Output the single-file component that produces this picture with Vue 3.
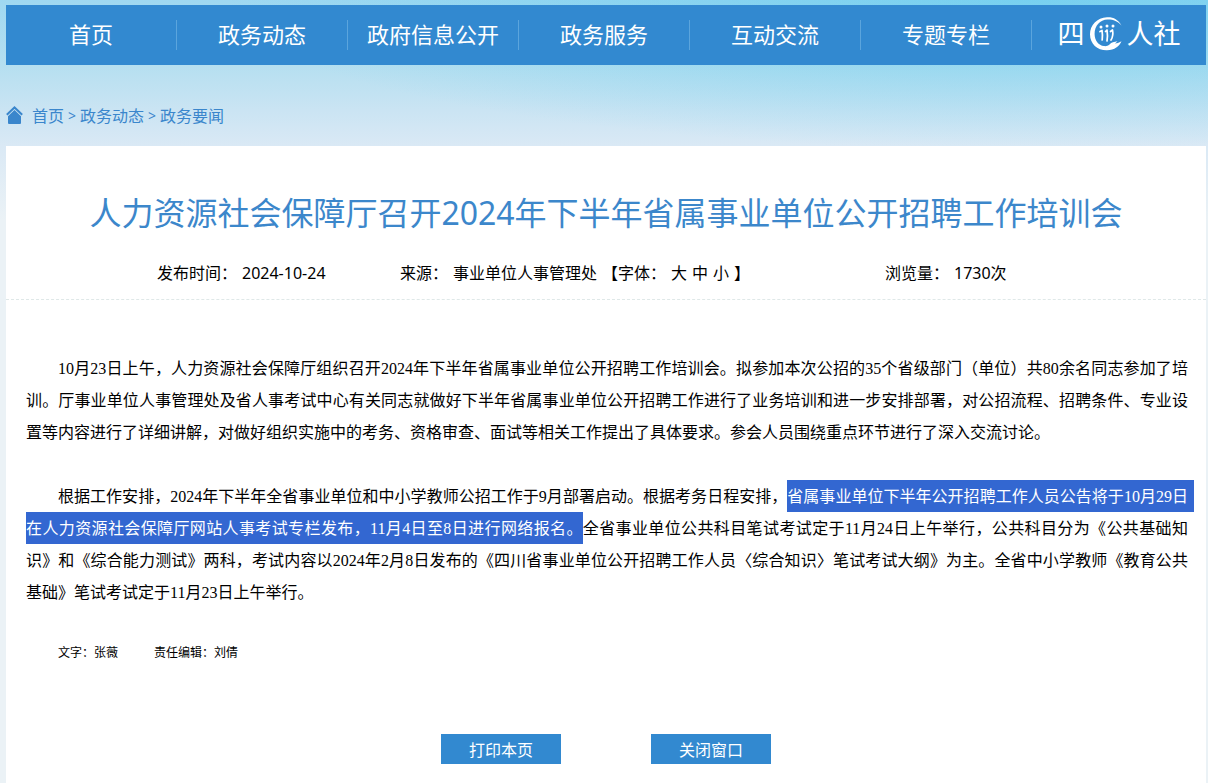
<script setup>
const navItems = ['首页', '政务动态', '政府信息公开', '政务服务', '互动交流', '专题专栏']
const crumbs = ['首页', '政务动态', '政务要闻']
const sizes = ['大', '中', '小']
const printPage = () => window.print()
const closePage = () => window.close()
</script>

<template>
  <div class="page">
    <nav class="nav" aria-label="主导航">
      <a v-for="item in navItems" :key="item" class="nav-item" href="#">{{ item }}</a>
      <a class="nav-logo" href="#">
        <span>四</span>
        <svg class="emblem" viewBox="0 0 34 36" aria-hidden="true">
          <path
            d="M32.500 9.500C29 3.200 24 .8 18 1.200 8 1.700 1 9 1 18.200 1 28 8.500 34.500 18 34.300c7.500-.2 12.500-4 14.500-9-3 1.500-4.500 2.200-6.500 2.200l2.500-2.200c-3.500.5-6 1-8 3.200-1.500 1.500-3.500 1.800-5.500 1.600C9.500 29.500 5.600 24.500 5.600 18 5.600 9.500 11 3.700 18.500 3.400c5.500-.2 10 1.500 14 6.100z"
            fill="currentColor"
          />
          <g fill="currentColor">
            <circle cx="12" cy="11" r="1.500" />
            <circle cx="18" cy="10" r="1.500" />
            <circle cx="24" cy="10" r="1.500" />
          </g>
          <g fill="none" stroke="currentColor" stroke-width="1.700" stroke-linecap="round" stroke-linejoin="round">
            <path d="M11 15.500l2-1c.6 3.500.6 6.500.2 9.500" />
            <path d="M16.500 15.500l1.500-1.500c.6 4 .6 7.500 0 11" />
            <path d="M21.500 15.500l2-1.500c.8 4 .4 7-1.500 10" />
          </g>
        </svg>
        <span>人社</span>
      </a>
    </nav>

    <nav class="crumbs" aria-label="当前位置">
      <svg class="home" viewBox="0 0 17 18" aria-hidden="true">
        <path d="M.8 8.800L8.500 1.500l7.700 7.300" fill="none" stroke="currentColor" stroke-width="2" />
        <path d="M8.500 4l6.500 6.200V17q0 1-1 1H3q-1 0-1-1v-6.800z" fill="currentColor" />
      </svg>
      <template v-for="(c, i) in crumbs" :key="c">
        <span v-if="i" class="sep">&gt;</span>
        <a href="#">{{ c }}</a>
      </template>
    </nav>

    <main class="article">
      <h1>人力资源社会保障厅召开2024年下半年省属事业单位公开招聘工作培训会</h1>

      <div class="meta">
        <div class="meta-cell"><span>发布时间：</span><span>2024-10-24</span></div>
        <div class="meta-cell">
          <span>来源：</span><span>事业单位人事管理处</span><span>【字体：</span>
          <button v-for="s in sizes" :key="s" class="size" type="button">{{ s }}</button>
          <span>】</span>
        </div>
        <div class="meta-cell"><span>浏览量：</span><span>1730次</span></div>
      </div>

      <div class="body">
        <p>10月23日上午，人力资源社会保障厅组织召开2024年下半年省属事业单位公开招聘工作培训会。拟参加本次公招的35个省级部门（单位）共80余名同志参加了培训。厅事业单位人事管理处及省人事考试中心有关同志就做好下半年省属事业单位公开招聘工作进行了业务培训和进一步安排部署，对公招流程、招聘条件、专业设置等内容进行了详细讲解，对做好组织实施中的考务、资格审查、面试等相关工作提出了具体要求。参会人员围绕重点环节进行了深入交流讨论。</p>
        <p>根据工作安排，2024年下半年全省事业单位和中小学教师公招工作于9月部署启动。根据考务日程安排，<mark class="tail">省属事业单位下半年公开招聘工作人员公告将于10月29日</mark><mark>在人力资源社会保障厅网站人事考试专栏发布，11月4日至8日进行网络报名。</mark>全省事业单位公共科目笔试考试定于11月24日上午举行，公共科目分为《公共基础知识》和《综合能力测试》两科，考试内容以2024年2月8日发布的《四川省事业单位公开招聘工作人员〈综合知识〉笔试考试大纲》为主。全省中小学教师《教育公共基础》笔试考试定于11月23日上午举行。</p>
      </div>

      <div class="credits"><span>文字：张薇</span><span>责任编辑：刘倩</span></div>

      <div class="actions">
        <button type="button" @click="printPage">打印本页</button>
        <button type="button" @click="closePage">关闭窗口</button>
      </div>
    </main>
  </div>
</template>

<style>
body {
  background: #ebf2f6;
}
</style>

<style scoped>
.page {
  min-height: 100vh;
  box-sizing: border-box;
  padding: 5px 2px 0 6px;
  font-family: "Noto Sans", "Noto Sans CJK SC", sans-serif;
  font-size: 16px;
  color: #000;
  text-spacing-trim: space-all;
  background:
    radial-gradient(ellipse 800px 150px at 85% 0, rgba(80, 200, 238, 0.5), rgba(80, 200, 238, 0)) no-repeat,
    linear-gradient(#9fd8f1 0, #b5dff0 65px, #cae4f3 110px, #dae9f5 146px, #ebf2f6 220px) no-repeat;
}
a {
  color: inherit;
  text-decoration: none;
}
button {
  border: 0;
  padding: 0;
  background: none;
  font: inherit;
  color: inherit;
  cursor: pointer;
}
.nav {
  display: grid;
  grid-template-columns: repeat(6, 57fr) 58fr;
  align-items: center;
  height: 60px;
  background: #3289d0;
  color: #fff;
}
.nav-item {
  border-right: 1px solid #5ba5dd;
  padding-bottom: 2px;
  font-size: 22px;
  line-height: 28px;
  text-align: center;
  white-space: nowrap;
}
.nav-logo {
  display: flex;
  align-items: center;
  justify-content: center;
  gap: 4px;
  padding-bottom: 3px;
  font-size: 27px;
  line-height: 36px;
}
.emblem {
  width: 34px;
  height: 36px;
}
.crumbs {
  display: flex;
  align-items: center;
  gap: 4px;
  height: 81px;
  box-sizing: border-box;
  padding-top: 18px;
  color: #3a86cc;
}
.home {
  width: 17px;
  height: 18px;
  margin-right: 5px;
}
.sep {
  padding-top: 2px;
  font-size: 14px;
}
.article {
  background: #fff;
  min-height: calc(100vh - 146px);
  box-sizing: border-box;
  padding-bottom: 19px;
}
h1 {
  margin: 0;
  padding: 43px 20px 0;
  font-size: 32px;
  line-height: 48px;
  font-weight: 400;
  text-align: center;
  color: #3c87cb;
}
.meta {
  display: grid;
  grid-template-columns: 243fr 485fr 321fr;
  padding: 24px 0 14px 151px;
  line-height: 24px;
  border-bottom: 1px dashed #dfe8e8;
}
.meta-cell {
  display: flex;
  gap: 5px;
  white-space: nowrap;
}
.body {
  padding: 53px 18px 0 20px;
  font-family: "Liberation Serif", "Noto Sans CJK SC", serif;
  line-height: 32px;
  text-align: justify;
}
.body p {
  margin: 0 0 32px;
  text-indent: 32px;
}
mark {
  padding: 8px 0 7px;
  background: #3367d1;
  color: #fff;
}
.tail {
  box-shadow: 6px 0 0 #3367d1;
}
.credits {
  display: flex;
  gap: 36px;
  padding-left: 52px;
  font-size: 12px;
  line-height: 24px;
}
.actions {
  display: flex;
  justify-content: center;
  gap: 90px;
  padding-top: 69px;
}
.actions button {
  width: 120px;
  height: 30px;
  background: #3289d0;
  color: #fff;
}
</style>
